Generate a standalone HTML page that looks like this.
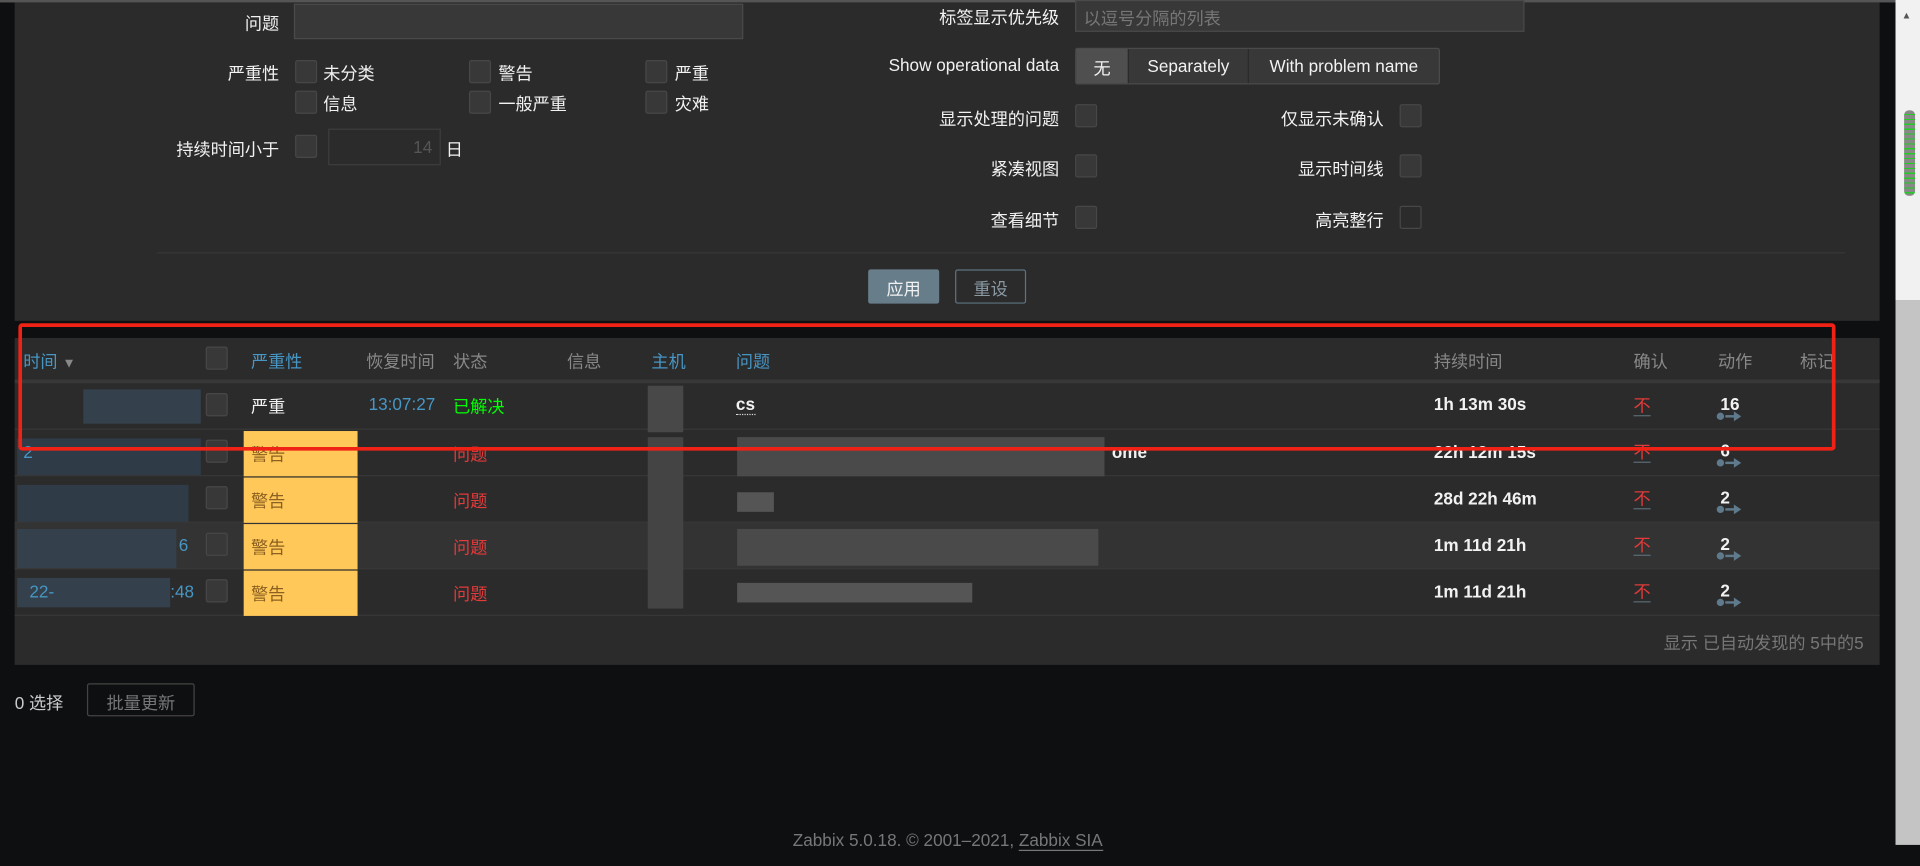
<!DOCTYPE html>
<html><head><meta charset="utf-8"><style>
*{box-sizing:border-box;margin:0;padding:0}
html,body{width:1920px;height:866px;overflow:hidden;background:#0e0f11}
#w{position:absolute;left:0;top:0;width:1568px;height:707px;transform:scale(1.22449);transform-origin:0 0;font-family:"Liberation Sans","Noto Sans CJK SC",sans-serif;font-size:14px;color:#f2f2f2}
.a{position:absolute;white-space:nowrap}
.p{background:#2b2b2b}
.cb{position:absolute;width:18px;height:19px;background:#383838;border:1px solid #474747;border-radius:2px}
.lr{position:absolute;text-align:right;white-space:nowrap}
.in{position:absolute;background:#383838;border:1px solid #4a4a4a}
.hd{color:#888}
.bl{color:#4796c4}
.row{position:absolute;left:12px;width:1523px;height:38px;border-bottom:1px solid #383838}
.y{position:absolute;left:199px;width:93px;height:37px;background:#ffc859;color:#8b6020;padding:9px 6px}
.r{color:#e33a3a}
.bk{position:absolute}
.b{font-weight:bold}
.ack{position:absolute;left:1334px;color:#e33a3a;border-bottom:1px solid #5a6a75;line-height:16px}
.act{position:absolute;left:1405px;font-weight:bold}
.act:after{content:"";position:absolute;left:-3px;top:15px;width:6px;height:6px;border-radius:3px;background:#5f7a8c}
.act:before{content:"";position:absolute;left:4px;top:17px;width:10px;height:2px;background:#5f7a8c}
.act i{position:absolute;left:11px;top:14px;width:0;height:0;border-left:6px solid #5f7a8c;border-top:4px solid transparent;border-bottom:4px solid transparent}
</style></head><body><div id="w">
<div class="a" style="left:0;top:0;width:1548px;height:2px;background:#555"></div>
<div class="a p" style="left:12px;top:2px;width:1523px;height:260px"></div>
<div class="lr" style="right:1340px;top:9px">问题</div>
<div class="in" style="left:240px;top:3px;width:367px;height:29px"></div>
<div class="lr" style="right:1340px;top:50px">严重性</div>
<div class="cb" style="left:241px;top:49px"></div><div class="a" style="left:264px;top:50px">未分类</div>
<div class="cb" style="left:383px;top:49px"></div><div class="a" style="left:407px;top:50px">警告</div>
<div class="cb" style="left:527px;top:49px"></div><div class="a" style="left:551px;top:50px">严重</div>
<div class="cb" style="left:241px;top:74px"></div><div class="a" style="left:264px;top:75px">信息</div>
<div class="cb" style="left:383px;top:74px"></div><div class="a" style="left:407px;top:75px">一般严重</div>
<div class="cb" style="left:527px;top:74px"></div><div class="a" style="left:551px;top:75px">灾难</div>
<div class="lr" style="right:1340px;top:112px">持续时间小于</div>
<div class="cb" style="left:241px;top:110px"></div>
<div class="in" style="left:268px;top:105px;width:92px;height:30px;background:#2b2b2b;border-color:#3d3d3d;color:#555;text-align:right;padding:6px 6px">14</div>
<div class="a" style="left:364px;top:112px">日</div>
<div class="lr" style="right:703px;top:4px">标签显示优先级</div>
<div class="in" style="left:878px;top:0;width:367px;height:26px;color:#777;padding:4px 6px">以逗号分隔的列表</div>
<div class="lr" style="right:703px;top:45px">Show operational data</div>
<div class="a" style="left:878px;top:39px;width:298px;height:30px;border:1px solid #4a4a4a;background:#383838;border-radius:2px"></div>
<div class="a" style="left:879px;top:40px;width:42px;height:28px;background:#4f4f4f;text-align:center;padding-top:6px">无</div>
<div class="a" style="left:921px;top:40px;width:98px;height:28px;border-left:1px solid #2b2b2b;text-align:center;padding-top:6px">Separately</div>
<div class="a" style="left:1019px;top:40px;width:156px;height:28px;border-left:1px solid #2b2b2b;text-align:center;padding-top:6px">With problem name</div>
<div class="lr" style="right:703px;top:87px">显示处理的问题</div><div class="cb" style="left:878px;top:85px"></div>
<div class="lr" style="right:438px;top:87px">仅显示未确认</div><div class="cb" style="left:1143px;top:85px"></div>
<div class="lr" style="right:703px;top:128px">紧凑视图</div><div class="cb" style="left:878px;top:126px"></div>
<div class="lr" style="right:438px;top:128px">显示时间线</div><div class="cb" style="left:1143px;top:126px"></div>
<div class="lr" style="right:703px;top:170px">查看细节</div><div class="cb" style="left:878px;top:168px"></div>
<div class="lr" style="right:438px;top:170px">高亮整行</div><div class="cb" style="left:1143px;top:168px;background:#2b2b2b"></div>
<div class="a" style="left:128px;top:206px;width:1379px;height:1px;background:#383838"></div>
<div class="a" style="left:709px;top:220px;width:58px;height:28px;background:#687d8a;border-radius:2px;text-align:center;padding-top:6px">应用</div>
<div class="a" style="left:780px;top:220px;width:58px;height:28px;border:1px solid #5d7380;border-radius:2px;text-align:center;padding-top:5px;color:#8a9aa5">重设</div>

<div class="a p" style="left:12px;top:276px;width:1523px;height:267px"></div>
<div class="a" style="left:12px;top:310px;width:1523px;height:3px;background:#383838"></div>
<div class="a bl" style="left:19px;top:285px">时间 <span style="color:#888;font-size:11px">▼</span></div>
<div class="cb" style="left:168px;top:283px"></div>
<div class="a bl" style="left:205px;top:285px">严重性</div>
<div class="a hd" style="left:299px;top:285px">恢复时间</div>
<div class="a hd" style="left:370px;top:285px">状态</div>
<div class="a hd" style="left:463px;top:285px">信息</div>
<div class="a bl" style="left:532px;top:285px">主机</div>
<div class="a bl" style="left:601px;top:285px">问题</div>
<div class="a hd" style="left:1171px;top:285px">持续时间</div>
<div class="a hd" style="left:1334px;top:285px">确认</div>
<div class="a hd" style="left:1403px;top:285px">动作</div>
<div class="a hd" style="left:1470px;top:285px">标记</div>

<div class="row" style="top:313px"></div>
<div class="row" style="top:351px"></div>
<div class="row" style="top:389px"></div>
<div class="row" style="top:427px;background:#333"></div>
<div class="row" style="top:465px"></div>
<div class="bk" style="left:68px;top:318px;width:96px;height:28px;background:#34404c"></div>
<div class="bk" style="left:14px;top:358px;width:150px;height:30px;background:#2f3b47"></div>
<div class="bk" style="left:14px;top:396px;width:140px;height:30px;background:#2f3b47"></div>
<div class="bk" style="left:14px;top:432px;width:130px;height:32px;background:#34404c"></div>
<div class="bk" style="left:14px;top:472px;width:125px;height:24px;background:#34404c"></div>
<div class="bk" style="left:529px;top:315px;width:29px;height:38px;background:#484848"></div>
<div class="bk" style="left:529px;top:357px;width:29px;height:140px;background:#444"></div>
<div class="bk" style="left:602px;top:357px;width:300px;height:32px;background:#4a4a4a"></div>
<div class="bk" style="left:602px;top:402px;width:30px;height:16px;background:#555"></div>
<div class="bk" style="left:602px;top:432px;width:295px;height:30px;background:#4a4a4a"></div>
<div class="bk" style="left:602px;top:476px;width:192px;height:16px;background:#555"></div>

<div class="cb" style="left:168px;top:321px"></div>
<div class="a" style="left:205px;top:322px">严重</div>
<div class="a bl" style="left:301px;top:322px">13:07:27</div>
<div class="a" style="left:370px;top:322px;color:#0f0">已解决</div>
<div class="a b" style="left:601px;top:322px;border-bottom:1px dotted #ddd;line-height:16px">cs</div>
<div class="a b" style="left:1171px;top:322px">1h 13m 30s</div>
<div class="ack" style="top:323px">不</div><div class="act" style="top:322px">16<i></i></div>

<div class="cb" style="left:168px;top:359px"></div><div class="y" style="top:352px">警告</div>
<div class="a r" style="left:370px;top:361px">问题</div>
<div class="a bl" style="left:19px;top:361px">2</div>
<div class="a b" style="left:908px;top:361px">ome</div>
<div class="a b" style="left:1171px;top:361px">22h 12m 15s</div>
<div class="ack" style="top:361px">不</div><div class="act" style="top:360px">6<i></i></div>

<div class="cb" style="left:168px;top:397px"></div><div class="y" style="top:390px">警告</div>
<div class="a r" style="left:370px;top:399px">问题</div>
<div class="a b" style="left:1171px;top:399px">28d 22h 46m</div>
<div class="ack" style="top:399px">不</div><div class="act" style="top:398px">2<i></i></div>

<div class="cb" style="left:168px;top:435px"></div><div class="y" style="top:428px">警告</div>
<div class="a r" style="left:370px;top:437px">问题</div>
<div class="a bl" style="left:146px;top:437px">6</div>
<div class="a b" style="left:1171px;top:437px">1m 11d 21h</div>
<div class="ack" style="top:437px">不</div><div class="act" style="top:436px">2<i></i></div>

<div class="cb" style="left:168px;top:473px"></div><div class="y" style="top:466px">警告</div>
<div class="a r" style="left:370px;top:475px">问题</div>
<div class="a bl" style="left:24px;top:475px">22-</div><div class="a bl" style="left:139px;top:475px">:48</div>
<div class="a b" style="left:1171px;top:475px">1m 11d 21h</div>
<div class="ack" style="top:475px">不</div><div class="act" style="top:474px">2<i></i></div>

<div class="lr" style="right:46px;top:515px;color:#777">显示 已自动发现的 5中的5</div>
<div class="a" style="left:12px;top:564px;color:#ccc">0 选择</div>
<div class="a" style="left:71px;top:558px;width:88px;height:27px;border:1px solid #444;border-radius:2px;text-align:center;padding-top:5px;color:#777">批量更新</div>
<div class="a" style="left:0;width:1548px;top:678px;text-align:center;color:#777">Zabbix 5.0.18. © 2001–2021, <span style="border-bottom:1px solid #777">Zabbix SIA</span></div>

<div class="a" style="left:15px;top:264px;width:1484px;height:104px;border:3px solid #f02216;border-radius:3px"></div>

<div class="a" style="left:1548px;top:0;width:20px;height:245px;background:#f1f1f1"></div>
<div class="a" style="left:1548px;top:245px;width:20px;height:445px;background:#c4c4c4"></div>
<div class="a" style="left:1555px;top:90px;width:9px;height:70px;background:#888;border-radius:4px;background-image:repeating-linear-gradient(#888 0 3px,#2c2 3px 4px)"></div>
<div class="a" style="left:1553px;top:8px;font-size:8px;color:#555">▲</div>
</div></body></html>
